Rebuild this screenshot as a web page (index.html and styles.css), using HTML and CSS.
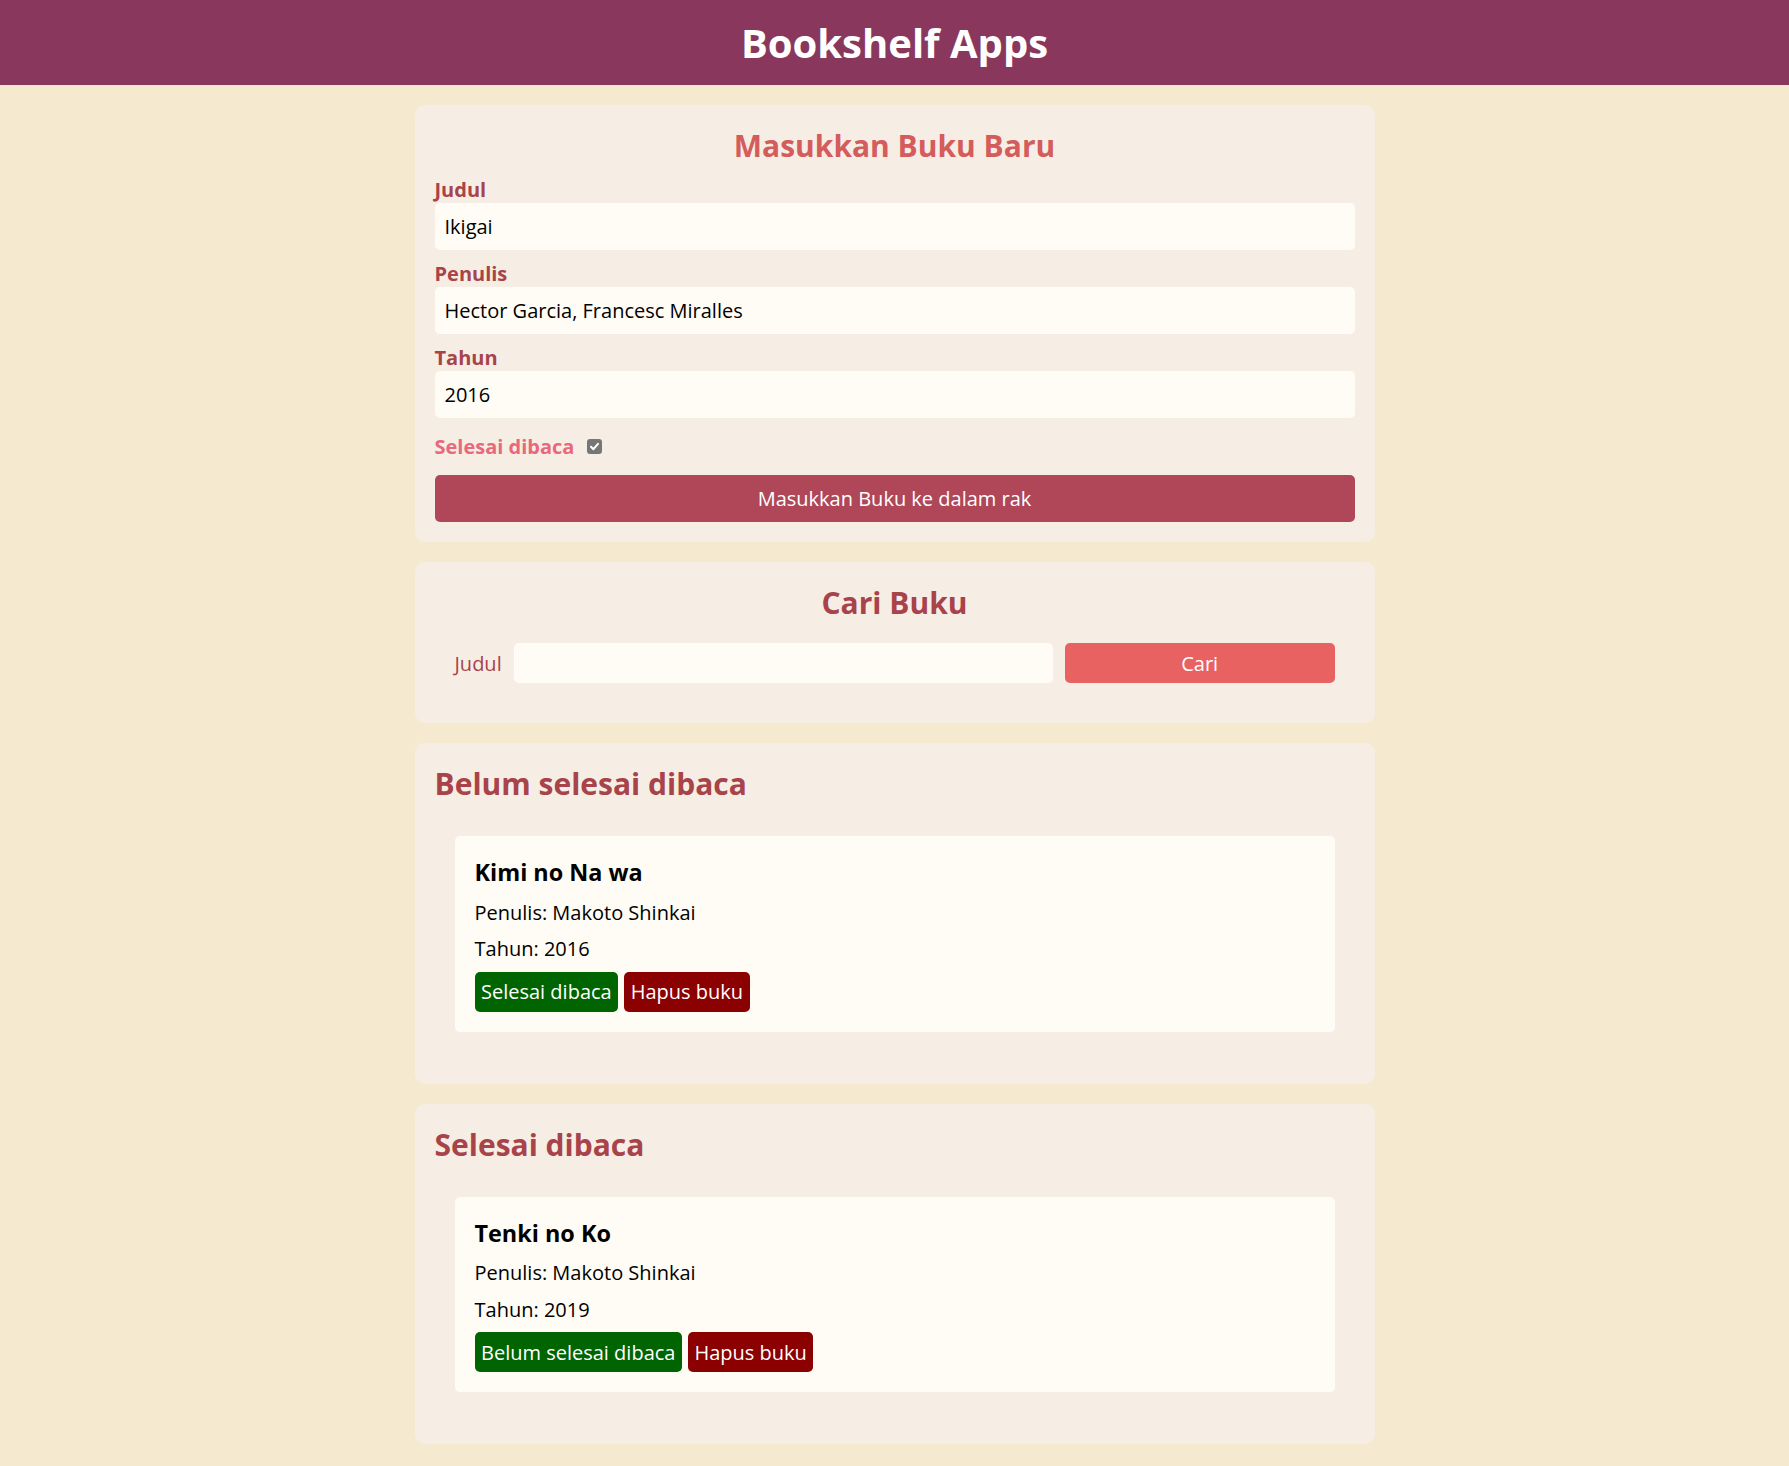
FILE: index.html
```html
<!DOCTYPE html>
<html lang="id">
<head>
<meta charset="utf-8">
<title>Bookshelf Apps</title>
<link rel="stylesheet" href="styles.css">
</head>
<body>
<header class="app-header">
  <h1 class="app-title">Bookshelf Apps</h1>
</header>
<main class="shelf">
  <section class="card">
    <h2 class="card-title card-title--coral">Masukkan Buku Baru</h2>
    <form class="book-form">
      <div class="field">
        <label class="field-label" for="inputTitle">Judul</label>
        <input class="field-input" id="inputTitle" type="text" value="Ikigai">
      </div>
      <div class="field">
        <label class="field-label" for="inputAuthor">Penulis</label>
        <input class="field-input" id="inputAuthor" type="text" value="Hector Garcia, Francesc Miralles">
      </div>
      <div class="field">
        <label class="field-label" for="inputYear">Tahun</label>
        <input class="field-input" id="inputYear" type="text" value="2016">
      </div>
      <div class="check-row">
        <span class="check-label">Selesai dibaca</span>
        <span class="checkbox"><svg width="11" height="11" viewBox="0 0 11 11"><polyline points="2,5.8 4.4,8.2 9,2.8" fill="none" stroke="#fff" stroke-width="2" stroke-linecap="round" stroke-linejoin="round"/></svg></span>
      </div>
      <button class="submit-btn" type="button">Masukkan Buku ke dalam rak</button>
    </form>
  </section>

  <section class="card">
    <h2 class="card-title">Cari Buku</h2>
    <form class="search-form">
      <label class="search-label" for="searchTitle">Judul</label>
      <input class="search-input" id="searchTitle" type="text">
      <button class="search-btn" type="button">Cari</button>
    </form>
  </section>

  <section class="card">
    <h2 class="shelf-title">Belum selesai dibaca</h2>
    <div class="book-list">
      <article class="book-item">
        <h3 class="book-title">Kimi no Na wa</h3>
        <p class="book-meta">Penulis: Makoto Shinkai</p>
        <p class="book-meta">Tahun: 2016</p>
        <div class="book-actions">
          <button class="action-btn btn-done" type="button">Selesai dibaca</button>
          <button class="action-btn btn-delete" type="button">Hapus buku</button>
        </div>
      </article>
    </div>
  </section>

  <section class="card">
    <h2 class="shelf-title">Selesai dibaca</h2>
    <div class="book-list">
      <article class="book-item">
        <h3 class="book-title">Tenki no Ko</h3>
        <p class="book-meta">Penulis: Makoto Shinkai</p>
        <p class="book-meta">Tahun: 2019</p>
        <div class="book-actions">
          <button class="action-btn btn-done" type="button">Belum selesai dibaca</button>
          <button class="action-btn btn-delete" type="button">Hapus buku</button>
        </div>
      </article>
    </div>
  </section>
</main>
</body>
</html>
```

FILE: styles.css
```css
* {
  box-sizing: border-box;
}

body {
  margin: 0;
  background: #f5e9cf;
  font-family: "Open Sans", "Noto Sans", sans-serif;
  color: #000;
}

.app-header {
  background: #8a375e;
  padding: 15px 0;
  text-align: center;
}

.app-title {
  margin: 0;
  font-size: 40px;
  line-height: 55px;
  font-weight: 700;
  color: #fff;
}

.shelf {
  width: 960px;
  margin: 20px auto;
  display: flex;
  flex-direction: column;
  gap: 20px;
}

.card {
  background: #f6eee5;
  border-radius: 10px;
  padding: 20px;
}

.card-title {
  margin: 0;
  font-size: 30px;
  line-height: 41px;
  font-weight: 700;
  text-align: center;
  color: #a8434a;
}

.card-title--coral {
  color: #d45c5c;
}

.book-form {
  display: flex;
  flex-direction: column;
  margin-top: 10px;
}

.field {
  display: flex;
  flex-direction: column;
}

.field + .field {
  margin-top: 10px;
}

.field-label {
  font-size: 20px;
  line-height: 27px;
  font-weight: 700;
  color: #a8434a;
}

.field-input {
  width: 100%;
  height: 47px;
  border: 0;
  border-radius: 5px;
  background: #fffcf5;
  padding: 0 10px;
  font-family: "Open Sans", "Noto Sans", sans-serif;
  font-size: 20px;
  color: #000;
  outline: none;
}

.check-row {
  display: flex;
  align-items: center;
  gap: 13px;
  margin: 15px 0;
}

.check-label {
  font-size: 20px;
  line-height: 27px;
  font-weight: 700;
  color: #e8687c;
}

.checkbox {
  width: 15px;
  height: 15px;
  border-radius: 3px;
  background: #767676;
  display: flex;
  align-items: center;
  justify-content: center;
}

.submit-btn {
  height: 47px;
  border: 0;
  border-radius: 5px;
  background: #b04758;
  color: #fff;
  font-family: "Open Sans", "Noto Sans", sans-serif;
  font-size: 20px;
}

.search-form {
  display: flex;
  align-items: center;
  gap: 12px;
  padding: 20px;
}

.search-label {
  font-size: 20px;
  line-height: 27px;
  color: #a8434a;
}

.search-input {
  flex: 2 1 0;
  min-width: 0;
  height: 40px;
  padding: 0;
  border: 0;
  border-radius: 5px;
  background: #fffcf5;
  outline: none;
}

.search-btn {
  flex: 1 1 0;
  min-width: 0;
  height: 40px;
  padding: 0;
  border: 0;
  border-radius: 5px;
  background: #e86262;
  color: #fff;
  font-family: "Open Sans", "Noto Sans", sans-serif;
  font-size: 20px;
}

.shelf-title {
  margin: 0;
  font-size: 30px;
  line-height: 41px;
  font-weight: 700;
  color: #a8434a;
}

.book-list {
  padding: 20px;
}

.book-item {
  margin: 12px 0;
  background: #fffcf5;
  border-radius: 5px;
  padding: 20px;
  display: flex;
  flex-direction: column;
  gap: 9.5px;
}

.book-title {
  margin: 0;
  font-size: 23.4px;
  line-height: 33px;
  font-weight: 700;
}

.book-meta {
  margin: 0;
  font-size: 20px;
  line-height: 27px;
}

.book-actions {
  display: flex;
  gap: 6px;
}

.action-btn {
  height: 40px;
  padding: 0 6.5px;
  border: 0;
  border-radius: 5px;
  color: #fff;
  font-family: "Open Sans", "Noto Sans", sans-serif;
  font-size: 20px;
}

.btn-done {
  background: #006400;
}

.btn-delete {
  background: #8b0000;
}
```
